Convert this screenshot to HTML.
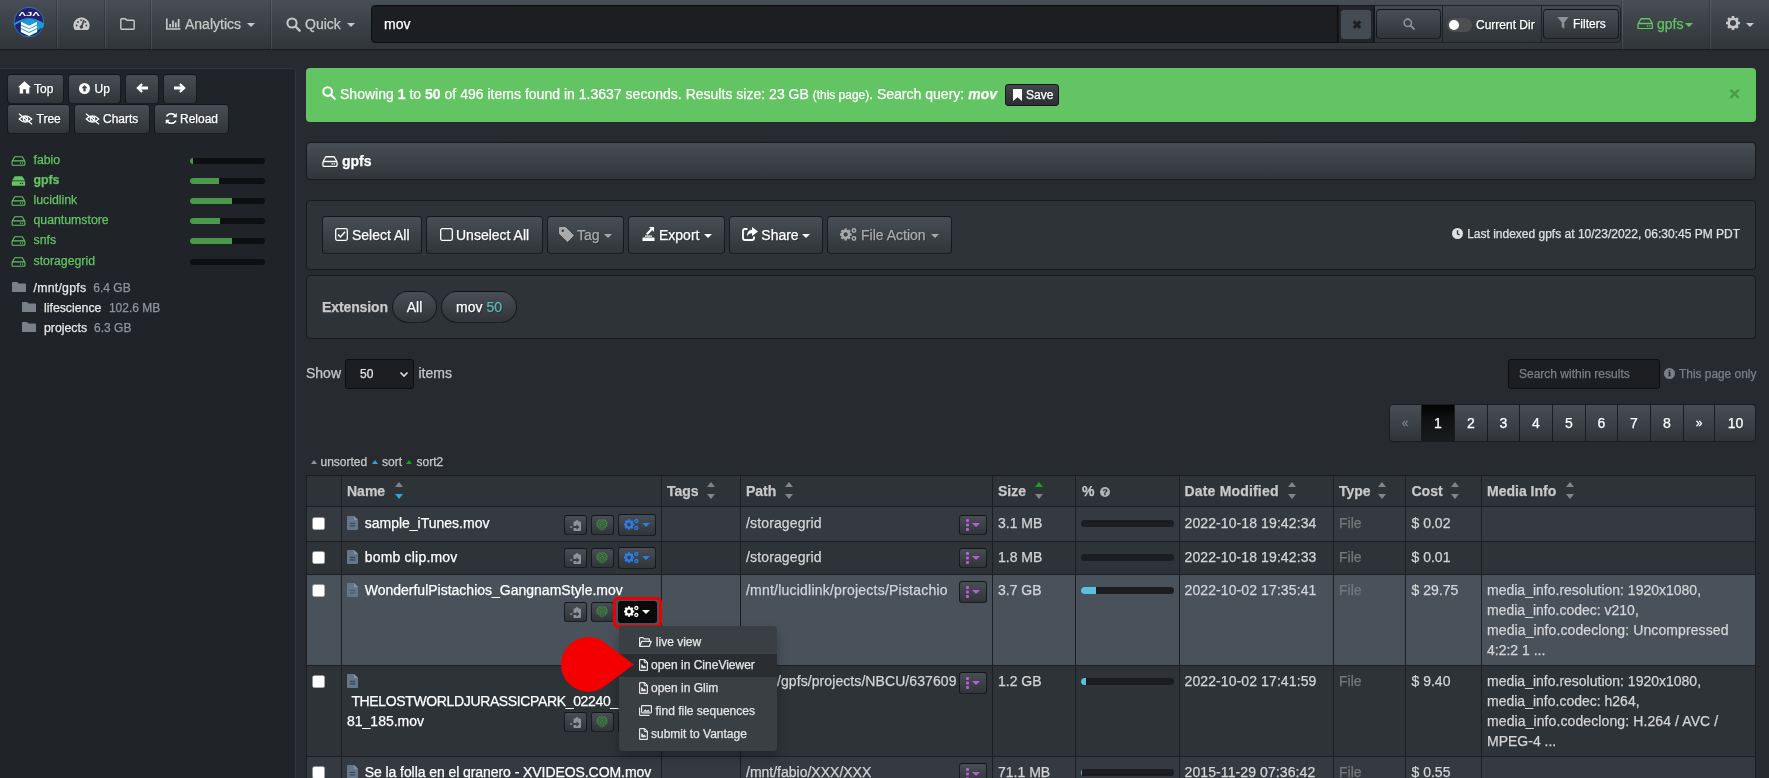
<!DOCTYPE html>
<html lang="en">
<head>
<meta charset="utf-8">
<title>diskover</title>
<style>
*{box-sizing:border-box}
html,body{margin:0;padding:0}
body{width:1769px;height:778px;overflow:hidden;background:#272b30;color:#c8c8c8;font-family:"Liberation Sans",Arial,sans-serif;font-size:14px;line-height:20px;position:relative;will-change:transform;-webkit-text-stroke:0.250px}
svg{display:inline-block;vertical-align:middle}
svg:not([fill]){fill:currentColor}
.abs{position:absolute}
/* NAVBAR */
#nav{position:absolute;left:0;top:0;width:1769px;height:50px;background:linear-gradient(#484e55,#3a3f44 60%,#313539);border-bottom:1px solid #191b1e}
#nav .sep{position:absolute;top:0;width:2px;height:49px;border-left:1px solid rgba(0,0,0,.2);border-right:1px solid rgba(255,255,255,.1)}
#nav .item{position:absolute;top:0;height:48px;line-height:49px;color:#c8c8c8;font-size:14px;white-space:nowrap}
.caret{display:inline-block;width:0;height:0;border-top:4px solid;border-left:4px solid transparent;border-right:4px solid transparent;vertical-align:middle;margin-left:3px}
.btn{position:absolute;border:1px solid rgba(0,0,0,.6);border-radius:4px;background:linear-gradient(#484e55,#3a3f44 60%,#313539);color:#fff;white-space:nowrap;text-shadow:1px 1px 1px rgba(0,0,0,.3)}
/* SIDEBAR */
#side{position:absolute;left:0;top:68px;width:296px;height:720px;background:#202328;border:1px solid #30353b;border-left:0;border-radius:0 4px 0 0}
.sbtn{height:30px;line-height:28px;font-size:12px;padding:0}
.sbtn span{position:absolute;top:0}
.vol{position:absolute;left:11px;height:20px;line-height:20px;font-size:12.300px;color:#62c462;white-space:nowrap}
.vol span{position:absolute;left:22.500px;top:0}
.vbar{position:absolute;left:190px;width:75px;height:6px;border-radius:3px;background:#0e0f11;overflow:hidden}
.vbar i{display:block;height:6px;background:#4b9a4b}
.dir{position:absolute;height:20px;line-height:20px;font-size:12.300px;color:#e8e8e8;white-space:nowrap}
.dir em{font-style:normal;color:#8f959c;margin-left:4px;font-size:12px}
/* MAIN */
#alert{position:absolute;left:306px;top:68px;width:1450px;height:54px;border-radius:4px;background:#62c462;color:#fff;font-size:14px;line-height:53px;white-space:nowrap}
.panel{position:absolute;left:306px;width:1450px;border:1px solid #17191c;border-radius:4px;background:#2e3338}
.tbtn{top:216px;height:38px;line-height:36px;font-size:14px}
.tbtn span{position:absolute;top:0}

</style>
</head>
<body>
<!-- NAVBAR -->
<div id="nav">
  <!-- logo -->
  <svg class="abs" style="left:13px;top:6px" width="32" height="32" viewBox="13 6 32 32" fill="none">
    <circle cx="28.950" cy="22.050" r="14.800" fill="#25206e" stroke="#1a90d0" stroke-width="0.800"/>
    <path d="M14.200 23.400 Q20.500 18.600 29.100 17.900 L20.900 21.800 L14.500 25.200Z" fill="#1d9ad6"/>
    <path d="M29.100 17.900 Q37.700 18.600 43.800 23.400 Q44 25.500 43.300 27 L37.100 30.800 L37.100 21.800Z" fill="#1d9ad6"/>
    <path d="M20.900 21.800 L29.100 17.900 L37.100 21.800 L37.100 32.100 L29.100 36 L20.900 32.100Z" fill="#1d9ad6"/>
    <path d="M20.900 21.80 L29.100 25.70 L37.100 21.80 L37.100 24.60 L29.100 28.50 L20.900 24.60Z" fill="#fff"/>
    <path d="M20.900 25.40 L29.100 29.30 L37.100 25.40 L37.100 28.00 L29.100 31.90 L20.900 28.00Z" fill="#fff"/>
    <path d="M20.900 29.00 L29.100 32.90 L37.100 29.00 L37.100 32.10 L29.100 36.00 L20.900 32.10Z" fill="#fff"/>
    <text x="29.200" y="16.100" font-family="Liberation Sans, sans-serif" font-size="5.700" font-weight="bold" fill="#fff" text-anchor="middle" textLength="21.400" lengthAdjust="spacingAndGlyphs">&#923;J&#923;</text>
  </svg>
  <div class="sep" style="left:56px"></div>
  <!-- tachometer -->
  <svg class="abs" style="left:73px;top:17px;color:#c8c8c8" width="17" height="14" viewBox="0 0 17 14">
    <path d="M8.5 0.500 A8 8 0 0 0 1.200 12 Q1.500 13 2.500 13 L14.500 13 Q15.500 13 15.800 12 A8 8 0 0 0 8.500 0.500Z"/>
    <path d="M10.800 3.500 L8.500 10" stroke="#3d4248" stroke-width="1.6" stroke-linecap="round" fill="none"/>
    <circle cx="8.300" cy="10" r="1.700" fill="#3d4248"/>
    <circle cx="3.600" cy="8.500" r="0.900" fill="#3d4248"/><circle cx="5" cy="5" r="0.900" fill="#3d4248"/><circle cx="8.200" cy="3.200" r="0.900" fill="#3d4248"/><circle cx="13.400" cy="8.500" r="0.900" fill="#3d4248"/><circle cx="12.300" cy="5" r="0.900" fill="#3d4248"/>
  </svg>
  <div class="sep" style="left:104px"></div>
  <!-- folder outline -->
  <svg class="abs" style="left:120px;top:18px;color:#c8c8c8" width="15" height="12" viewBox="0 0 15 12">
    <path d="M1.700 0.800 L5.300 0.800 L6.800 2.300 L13.300 2.300 Q14.200 2.300 14.200 3.200 L14.200 10.300 Q14.200 11.200 13.300 11.200 L1.700 11.200 Q0.800 11.200 0.800 10.300 L0.800 1.700 Q0.800 0.800 1.700 0.800Z" fill="none" stroke="currentColor" stroke-width="1.4"/>
  </svg>
  <div class="sep" style="left:150px"></div>
  <!-- bar chart -->
  <svg class="abs" style="left:166px;top:18px;color:#c8c8c8" width="15" height="12" viewBox="0 0 15 12">
    <path d="M0.800 0.500 L0.800 11 L14.500 11" fill="none" stroke="currentColor" stroke-width="1.600"/>
    <rect x="3.300" y="6" width="1.800" height="3.400"/><rect x="6.100" y="2.500" width="1.800" height="6.900"/><rect x="8.900" y="4.500" width="1.800" height="4.900"/><rect x="11.700" y="1" width="1.800" height="8.400"/>
  </svg>
  <div class="item" style="left:185px">Analytics<span class="caret" style="margin-left:6px"></span></div>
  <div class="sep" style="left:270px"></div>
  <svg class="abs" style="left:286px;top:17px;color:#c8c8c8" width="15" height="15" viewBox="0 0 15 15">
    <circle cx="6" cy="6" r="4.600" fill="none" stroke="currentColor" stroke-width="2"/><path d="M9.500 9.500 L13.600 13.600" stroke="currentColor" stroke-width="2.400" stroke-linecap="round"/>
  </svg>
  <div class="item" style="left:305px">Quick<span class="caret" style="margin-left:6px"></span></div>
  <!-- search input group -->
  <div class="abs" style="left:371px;top:5px;width:967px;height:38px;background:#1c1e22;border:1px solid #0c0d0e;border-radius:4px 0 0 4px;color:#fff;font-size:14px;line-height:36px;padding-left:12px">mov</div>
  <div class="abs" style="left:1338px;top:5px;width:283px;height:38px;border:1px solid #1f2226;border-left:0;border-radius:0 5px 5px 0;background:linear-gradient(#434950,#373c41 60%,#303438)"></div>
  <div class="abs" style="left:1338px;top:5px;width:37px;height:38px;background:#22252a;border:1px solid #16181b;border-width:1px 2px 1px 1px"></div>
  <div class="abs" style="left:1341px;top:10px;width:30px;height:29px;background:#454b53;border-radius:3px;color:#1c1e22;text-align:center;font-size:11.500px;font-weight:bold;line-height:30px;padding-left:1px;-webkit-text-stroke:0">&#10006;</div>
  <div class="btn" style="left:1376px;top:9px;width:65px;height:30px"></div>
  <svg class="abs" style="left:1402.800px;top:17.600px;color:#8d939a" width="12" height="12" viewBox="0 0 15 15">
    <circle cx="6" cy="6" r="4.600" fill="none" stroke="currentColor" stroke-width="2"/><path d="M9.500 9.500 L13.600 13.600" stroke="currentColor" stroke-width="2.400" stroke-linecap="round"/>
  </svg>
  <div class="abs" style="left:1442px;top:6px;width:1px;height:36px;background:#1f2226"></div>
  <div class="abs" style="left:1447px;top:18px;width:25px;height:14px;border-radius:7px;background:#4e4e50"></div>
  <div class="abs" style="left:1449px;top:20px;width:10px;height:10px;border-radius:5px;background:#fff"></div>
  <div class="abs" style="left:1476px;top:15px;font-size:12px;line-height:20px;color:#fff;text-shadow:1px 1px 1px rgba(0,0,0,.3);white-space:nowrap">Current Dir</div>
  <div class="abs" style="left:1541px;top:6px;width:1px;height:36px;background:#1f2226"></div>
  <div class="btn" style="left:1543px;top:9px;width:76px;height:30px;font-size:12px;line-height:29px;padding-left:29px">Filters</div>
  <svg class="abs" style="left:1557px;top:17px;color:#8d939a" width="12" height="12" viewBox="0 0 12 12"><path d="M0.300 0 L11.700 0 L7.300 5.200 L7.300 12 L4.700 9.800 L4.700 5.200Z"/></svg>
  <div class="sep" style="left:1621px"></div>
  <!-- hdd green -->
  <svg class="abs" style="left:1636.500px;top:18px;color:#62c462" width="16.500" height="11.300" viewBox="0 0 17 12">
    <path d="M4 0.800 L13 0.800 L16 6 L1 6Z M1.800 5.800 L15.200 5.800 Q16.200 5.800 16.200 6.800 L16.200 10.200 Q16.200 11.200 15.200 11.200 L1.800 11.200 Q0.800 11.200 0.800 10.200 L0.800 6.800 Q0.800 5.800 1.800 5.800Z" fill="none" stroke="currentColor" stroke-width="1.400" stroke-linejoin="round"/>
    <rect x="10.200" y="7.800" width="1.400" height="1.500"/><rect x="12.600" y="7.800" width="1.400" height="1.500"/>
  </svg>
  <div class="item" style="left:1657px;color:#62c462">gpfs<span class="caret" style="margin-left:2px"></span></div>
  <div class="sep" style="left:1709px"></div>
  <!-- gear -->
  <svg class="abs" style="left:1726px;top:16px;color:#c8c8c8" width="14" height="14" viewBox="-7 -7 14 14">
    <g id="gearshape"><circle r="4.300" fill="none" stroke="currentColor" stroke-width="2.600"/>
    <g stroke="currentColor" stroke-width="2.600"><path d="M0 -7V-4.500M0 7V4.500M-7 0H-4.500M7 0H4.500M-4.950 -4.950L-3.300 -3.300M4.950 4.950L3.300 3.300M-4.950 4.950L-3.300 3.300M4.950 -4.950L3.300 -3.300"/></g></g>
  </svg>
  <div class="item" style="left:1746px;color:#c8c8c8"><span class="caret" style="margin-left:0"></span></div>
</div>
<!-- SIDEBAR -->
<div id="side"></div>
<div class="btn sbtn" style="left:7px;top:74px;width:57px"><svg class="abs" style="left:10px;top:6px" width="13" height="13" viewBox="0 0 13 13"><path d="M6.500 0.300 L13 6.300 L11.300 6.300 L11.300 12.500 L7.900 12.500 L7.900 8.300 L5.100 8.300 L5.100 12.500 L1.700 12.500 L1.700 6.300 L0 6.300Z" fill="#fff"/></svg><span style="left:26px">Top</span></div>
<div class="btn sbtn" style="left:68px;top:74px;width:53px"><svg class="abs" style="left:10px;top:8px" width="11" height="11" viewBox="0 0 12 12"><circle cx="6" cy="6" r="6" fill="#fff"/><path d="M6 2.300 L9.300 5.800 L7.200 5.800 L7.200 9.300 L4.800 9.300 L4.800 5.800 L2.700 5.800Z" fill="#3d4248"/></svg><span style="left:25.500px">Up</span></div>
<div class="btn sbtn" style="left:125px;top:74px;width:34px"><svg class="abs" style="left:10px;top:8px" width="12" height="10" viewBox="0 0 12 10"><path d="M5.400 0.300 L6.900 1.800 L5.100 3.600 L12 3.600 L12 6.400 L5.100 6.400 L6.900 8.200 L5.400 9.700 L0.200 5Z" fill="#fff"/></svg></div>
<div class="btn sbtn" style="left:163px;top:74px;width:34px"><svg class="abs" style="left:10px;top:8px" width="12" height="10" viewBox="0 0 12 10"><path d="M6.600 0.300 L5.100 1.800 L6.900 3.600 L0 3.600 L0 6.400 L6.900 6.400 L5.100 8.200 L6.600 9.700 L11.800 5Z" fill="#fff"/></svg></div>
<div class="btn sbtn" style="left:7px;top:104px;width:63px"><svg class="abs" style="left:10px;top:7.500px" width="15" height="12" viewBox="0 0 16 12" fill="none" stroke="#fff" stroke-width="1.250"><path d="M1.300 6 Q8 -0.800 14.700 6 Q8 12.800 1.300 6Z"/><circle cx="8" cy="6" r="2.300"/><path d="M1 0.300 L15 11.700" stroke-width="1.350"/></svg><span style="left:28.500px">Tree</span></div>
<div class="btn sbtn" style="left:74px;top:104px;width:76px"><svg class="abs" style="left:10px;top:7.500px" width="15" height="12" viewBox="0 0 16 12" fill="none" stroke="#fff" stroke-width="1.250"><path d="M1.300 6 Q8 -0.800 14.700 6 Q8 12.800 1.300 6Z"/><circle cx="8" cy="6" r="2.300"/><path d="M1 0.300 L15 11.700" stroke-width="1.350"/></svg><span style="left:28px">Charts</span></div>
<div class="btn sbtn" style="left:154px;top:104px;width:75px"><svg class="abs" style="left:9.500px;top:6.500px" width="12.500" height="13" viewBox="0 0 12 12" fill="none" stroke="#fff" stroke-width="1.600"><path d="M10.500 4.500 A5 5 0 0 0 1.500 4"/><path d="M1.500 7.500 A5 5 0 0 0 10.500 8"/><path d="M11.300 0.800 V4.800 H7.300Z M0.700 11.200 V7.200 H4.700Z" fill="#fff" stroke="none"/></svg><span style="left:25px">Reload</span></div>
<div class="vol" style="top:150px"><svg class="abs" style="left:0;top:5.500px" width="15" height="10" viewBox="0 0 17 12"><path d="M4 0.800 L13 0.800 L16 6 L1 6Z M1.800 5.800 L15.200 5.800 Q16.200 5.800 16.200 6.800 L16.200 10.200 Q16.200 11.200 15.200 11.200 L1.800 11.200 Q0.800 11.200 0.800 10.200 L0.800 6.800 Q0.800 5.800 1.800 5.800Z" fill="none" stroke="currentColor" stroke-width="1.250" stroke-linejoin="round"/><rect x="10.200" y="7.800" width="1.400" height="1.500"/><rect x="12.600" y="7.800" width="1.400" height="1.500"/></svg><span>fabio</span></div>
<div class="vbar" style="top:158px"><i style="width:3px"></i></div>
<div class="vol" style="top:170px;font-weight:bold"><svg class="abs" style="left:0;top:5.500px" width="15" height="10" viewBox="0 0 17 12"><path d="M4 0.300 L13 0.300 L16.300 5.300 L0.700 5.300Z M1.800 6.200 L15.200 6.200 Q16.500 6.200 16.500 7.200 L16.500 10.700 Q16.500 11.700 15.200 11.700 L1.800 11.700 Q0.500 11.700 0.500 10.700 L0.500 7.200 Q0.500 6.200 1.800 6.200Z"/><rect x="10.200" y="8.200" width="1.400" height="1.500" fill="#202328"/><rect x="12.600" y="8.200" width="1.400" height="1.500" fill="#202328"/></svg><span>gpfs</span></div>
<div class="vbar" style="top:178px"><i style="width:29px"></i></div>
<div class="vol" style="top:190px"><svg class="abs" style="left:0;top:5.500px" width="15" height="10" viewBox="0 0 17 12"><path d="M4 0.800 L13 0.800 L16 6 L1 6Z M1.800 5.800 L15.200 5.800 Q16.200 5.800 16.200 6.800 L16.200 10.200 Q16.200 11.200 15.200 11.200 L1.800 11.200 Q0.800 11.200 0.800 10.200 L0.800 6.800 Q0.800 5.800 1.800 5.800Z" fill="none" stroke="currentColor" stroke-width="1.250" stroke-linejoin="round"/><rect x="10.200" y="7.800" width="1.400" height="1.500"/><rect x="12.600" y="7.800" width="1.400" height="1.500"/></svg><span>lucidlink</span></div>
<div class="vbar" style="top:198px"><i style="width:42px"></i></div>
<div class="vol" style="top:210px"><svg class="abs" style="left:0;top:5.500px" width="15" height="10" viewBox="0 0 17 12"><path d="M4 0.800 L13 0.800 L16 6 L1 6Z M1.800 5.800 L15.200 5.800 Q16.200 5.800 16.200 6.800 L16.200 10.200 Q16.200 11.200 15.200 11.200 L1.800 11.200 Q0.800 11.200 0.800 10.200 L0.800 6.800 Q0.800 5.800 1.800 5.800Z" fill="none" stroke="currentColor" stroke-width="1.250" stroke-linejoin="round"/><rect x="10.200" y="7.800" width="1.400" height="1.500"/><rect x="12.600" y="7.800" width="1.400" height="1.500"/></svg><span>quantumstore</span></div>
<div class="vbar" style="top:218px"><i style="width:30px"></i></div>
<div class="vol" style="top:230px"><svg class="abs" style="left:0;top:5.500px" width="15" height="10" viewBox="0 0 17 12"><path d="M4 0.800 L13 0.800 L16 6 L1 6Z M1.800 5.800 L15.200 5.800 Q16.200 5.800 16.200 6.800 L16.200 10.200 Q16.200 11.200 15.200 11.200 L1.800 11.200 Q0.800 11.200 0.800 10.200 L0.800 6.800 Q0.800 5.800 1.800 5.800Z" fill="none" stroke="currentColor" stroke-width="1.250" stroke-linejoin="round"/><rect x="10.200" y="7.800" width="1.400" height="1.500"/><rect x="12.600" y="7.800" width="1.400" height="1.500"/></svg><span>snfs</span></div>
<div class="vbar" style="top:238px"><i style="width:42px"></i></div>
<div class="vol" style="top:251px"><svg class="abs" style="left:0;top:5.500px" width="15" height="10" viewBox="0 0 17 12"><path d="M4 0.800 L13 0.800 L16 6 L1 6Z M1.800 5.800 L15.200 5.800 Q16.200 5.800 16.200 6.800 L16.200 10.200 Q16.200 11.200 15.200 11.200 L1.800 11.200 Q0.800 11.200 0.800 10.200 L0.800 6.800 Q0.800 5.800 1.800 5.800Z" fill="none" stroke="currentColor" stroke-width="1.250" stroke-linejoin="round"/><rect x="10.200" y="7.800" width="1.400" height="1.500"/><rect x="12.600" y="7.800" width="1.400" height="1.500"/></svg><span>storagegrid</span></div>
<div class="vbar" style="top:259px"><i style="width:0px"></i></div>
<div class="dir" style="left:12px;top:278px"><svg width="14" height="10.500" viewBox="0 0 15 11" style="position:absolute;left:0;top:3.500px;color:#7a8088"><path d="M1 0 L5.500 0 L7 1.600 L14 1.600 Q15 1.600 15 2.600 L15 10 Q15 11 14 11 L1 11 Q0 11 0 10 L0 1 Q0 0 1 0Z"/></svg><span style="margin-left:21.500px;letter-spacing:0.250px">/mnt/gpfs</span><em style="margin-left:7px">6.4 GB</em></div>
<div class="dir" style="left:22px;top:298px"><svg width="14" height="10.500" viewBox="0 0 15 11" style="position:absolute;left:0;top:3.500px;color:#7a8088"><path d="M1 0 L5.500 0 L7 1.600 L14 1.600 Q15 1.600 15 2.600 L15 10 Q15 11 14 11 L1 11 Q0 11 0 10 L0 1 Q0 0 1 0Z"/></svg><span style="margin-left:22px">lifescience</span><em style="margin-left:7.500px">102.6 MB</em></div>
<div class="dir" style="left:22px;top:318px"><svg width="14" height="10.500" viewBox="0 0 15 11" style="position:absolute;left:0;top:3.500px;color:#7a8088"><path d="M1 0 L5.500 0 L7 1.600 L14 1.600 Q15 1.600 15 2.600 L15 10 Q15 11 14 11 L1 11 Q0 11 0 10 L0 1 Q0 0 1 0Z"/></svg><span style="margin-left:22px">projects</span><em style="margin-left:7px">6.3 GB</em></div>

<!-- MAIN -->

<div id="alert">
  <svg class="abs" style="left:16px;top:18px" width="14" height="14" viewBox="0 0 15 15"><circle cx="6" cy="6" r="4.600" fill="none" stroke="#fff" stroke-width="2.200"/><path d="M9.500 9.500 L13.600 13.600" stroke="#fff" stroke-width="2.400" stroke-linecap="round"/></svg>
  <span class="abs" style="left:34px;top:0;letter-spacing:0.015px">Showing <b>1</b> to <b>50</b> of 496 items found in 1.3637 seconds. Results size: 23 GB <small style="font-size:11.900px">(this page)</small>. Search query: <b><i>mov</i></b></span>
  <div class="abs" style="left:699px;top:16px;width:54px;height:22px;border:1px solid #14161a;border-radius:3px;background:linear-gradient(#41464d,#34383d 60%,#2b2e33);color:#fff;font-size:12px;line-height:20px;padding-left:20px">Save</div>
  <svg class="abs" style="left:707px;top:21px" width="9" height="12" viewBox="0 0 9 11" preserveAspectRatio="none"><path d="M0 0 H9 V11 L4.500 7.500 L0 11Z" fill="#fff"/></svg>
  <div class="abs" style="left:1423px;top:0;color:#4a9a4a;font-size:19px;font-weight:bold;line-height:52px">&#215;</div>
</div>
<!-- breadcrumb -->
<div class="abs" style="left:306px;top:142px;width:1450px;height:38px;border:1px solid #17191c;border-radius:4px;background:linear-gradient(#484e55,#3a3f44 60%,#313539);color:#fff;font-weight:bold;font-size:14px;line-height:36px">
  <svg class="abs" style="left:15px;top:12.500px;color:#fff" width="16" height="11" viewBox="0 0 17 12"><path d="M4 0.800 L13 0.800 L16 6 L1 6Z M1.800 5.800 L15.200 5.800 Q16.200 5.800 16.200 6.800 L16.200 10.200 Q16.200 11.200 15.200 11.200 L1.800 11.200 Q0.800 11.200 0.800 10.200 L0.800 6.800 Q0.800 5.800 1.800 5.800Z" fill="none" stroke="currentColor" stroke-width="1.400" stroke-linejoin="round"/><rect x="10.200" y="7.800" width="1.400" height="1.500"/><rect x="12.600" y="7.800" width="1.400" height="1.500"/></svg>
  <span class="abs" style="left:35px;top:0">gpfs</span>
</div>
<!-- buttons panel -->
<div class="panel" style="top:200px;height:70px"></div>
<div class="btn tbtn" style="left:322px;width:100px"><svg class="abs" style="left:12px;top:11px" width="13" height="13" viewBox="0 0 13 13" fill="none" stroke="#fff" stroke-width="1.300"><rect x="0.700" y="0.700" width="11.600" height="11.600" rx="1.500"/><path d="M3 6.500 L5.500 9 L10 3.800" stroke-width="1.500"/></svg><span style="left:29px">Select All</span></div>
<div class="btn tbtn" style="left:426px;width:117px"><svg class="abs" style="left:13px;top:11px" width="13" height="13" viewBox="0 0 13 13" fill="none" stroke="#fff" stroke-width="1.300"><rect x="0.700" y="0.700" width="11.600" height="11.600" rx="1.500"/></svg><span style="left:29px">Unselect All</span></div>
<div class="btn tbtn" style="left:547px;width:77px;color:#aaa"><svg class="abs" style="left:11px;top:10px" width="15" height="15" viewBox="0 0 15 15"><path d="M0.500 0.500 H6.500 L14.500 8.500 L8.500 14.500 L0.500 6.500Z" fill="#aaa" stroke="#aaa" stroke-linejoin="round" stroke-width="1"/><circle cx="3.800" cy="3.800" r="1.300" fill="#3d4248"/></svg><span style="left:29px">Tag</span><i class="caret" style="position:absolute;left:56px;top:17px;margin:0"></i></div>
<div class="btn tbtn" style="left:628px;width:97px"><svg class="abs" style="left:13px;top:10px" width="13" height="14" viewBox="0 0 13 14" fill="#fff"><path d="M0.500 10.500 H12.500 V14 H0.500Z"/><path d="M3 8.500 H10 V9.700 H3Z"/><path d="M7 0 H12 V5 L10.300 3.300 L5.500 8 L4 6.500 L8.700 1.700Z"/></svg><span style="left:30px">Export</span><i class="caret" style="position:absolute;left:75px;top:17px;margin:0"></i></div>
<div class="btn tbtn" style="left:729px;width:94px"><svg class="abs" style="left:12px;top:10px" width="16" height="14" viewBox="0 0 16 14"><path d="M5.500 2 H3 Q1 2 1 4 V11 Q1 13 3 13 H10 Q12 13 12 11 V9.500" fill="none" stroke="#fff" stroke-width="1.800"/><path d="M10 0 L16 4.500 L10 9 V6.300 Q6.500 6.300 5 9.500 Q5 3 10 2.800Z" fill="#fff"/></svg><span style="left:31.300px">Share</span><i class="caret" style="position:absolute;left:72px;top:17px;margin:0"></i></div>
<div class="btn tbtn" style="left:827px;width:125px;color:#aaa"><svg class="abs" style="left:12px;top:10px;color:#aaa" width="17" height="15" viewBox="0 0 15 13"><g transform="translate(5,6.500)"><circle r="3" fill="none" stroke="currentColor" stroke-width="2.200"/><g stroke="currentColor" stroke-width="2.100"><path d="M0 -5.200V-3.400M0 5.200V3.400M-5.200 0H-3.400M5.200 0H3.400M-3.700 -3.700L-2.400 -2.400M3.700 3.700L2.400 2.400M-3.700 3.700L-2.400 2.400M3.700 -3.700L2.400 -2.400"/></g></g><circle cx="12.300" cy="3" r="1.500" fill="none" stroke="currentColor" stroke-width="1.300"/><circle cx="12.300" cy="10" r="1.500" fill="none" stroke="currentColor" stroke-width="1.300"/></svg><span style="left:33px">File Action</span><i class="caret" style="position:absolute;left:103px;top:17px;margin:0"></i></div>
<svg class="abs" style="left:1452px;top:228px" width="11" height="11" viewBox="0 0 11 11"><circle cx="5.500" cy="5.500" r="5.500" fill="#e0e0e0"/><path d="M5.500 2.300 V5.800 L7.600 7" fill="none" stroke="#2e3338" stroke-width="1.300"/></svg>
<div class="abs" style="left:1340px;top:224px;width:400px;text-align:right;font-size:12px;color:#e0e0e0;white-space:nowrap">Last indexed gpfs at 10/23/2022, 06:30:45 PM PDT</div>
<!-- extension panel -->
<div class="panel" style="top:275px;height:64px"></div>
<div class="abs" style="left:322px;top:297px;font-weight:bold;color:#c8c8c8;font-size:14px;letter-spacing:-0.100px">Extension</div>
<div class="btn" style="left:392px;top:291px;width:45px;height:32px;border-radius:16px;text-align:center;line-height:30px;font-size:14px">All</div>
<div class="btn" style="left:441px;top:291px;width:76px;height:32px;border-radius:16px;text-align:center;line-height:30px;font-size:14px">mov <span style="color:#5bb8b8">50</span></div>
<!-- show row -->
<div class="abs" style="left:306px;top:363px;font-size:14px;color:#c8c8c8">Show</div>
<div class="abs" style="left:345px;top:359px;width:69px;height:30px;border:1px solid #0c0d0e;border-radius:3px;background:#1c1e22;color:#e4e4e4;font-size:12px;line-height:28px;padding-left:14px">50</div>
<svg class="abs" style="left:399px;top:371px" width="10" height="7" viewBox="0 0 10 7"><path d="M1.500 1.500 L5 5 L8.500 1.500" fill="none" stroke="#ddd" stroke-width="1.700"/></svg>
<div class="abs" style="left:418.500px;top:363px;font-size:14px;color:#c8c8c8">items</div>
<div class="abs" style="left:1508px;top:359px;width:152px;height:30px;border:1px solid #0c0d0e;border-radius:3px;background:#1c1e22;color:#7a8088;font-size:12px;line-height:28px;padding-left:10px">Search within results</div>
<div class="abs" style="left:1664px;top:368px;width:11px;height:11px;border-radius:6px;background:#7a8088;color:#272b30;font-size:9px;font-weight:bold;line-height:11px;text-align:center;font-family:'Liberation Serif',serif">i</div>
<div class="abs" style="left:1679px;top:364px;font-size:11.900px;color:#7a8088;white-space:nowrap">This page only</div>
<div class="abs" style="left:1389px;top:404px;width:367px;height:38px;border:1px solid #1a1c1f;border-radius:4px;background:linear-gradient(#484e55,#3a3f44 60%,#313539);overflow:hidden"></div>
<div class="abs" style="left:1389px;top:405px;width:32px;height:36px;line-height:37px;text-align:center;font-size:14px;color:#fff;border-left:1px solid #1a1c1f;font-size:12px;color:#7a8088;border-left:0;">«</div>
<div class="abs" style="left:1421px;top:405px;width:33px;height:36px;line-height:37px;text-align:center;font-size:14px;color:#fff;border-left:1px solid #1a1c1f;background:linear-gradient(#020202,#101112 40%,#191b1e);">1</div>
<div class="abs" style="left:1454px;top:405px;width:33px;height:36px;line-height:37px;text-align:center;font-size:14px;color:#fff;border-left:1px solid #1a1c1f;">2</div>
<div class="abs" style="left:1487px;top:405px;width:32px;height:36px;line-height:37px;text-align:center;font-size:14px;color:#fff;border-left:1px solid #1a1c1f;">3</div>
<div class="abs" style="left:1519px;top:405px;width:33px;height:36px;line-height:37px;text-align:center;font-size:14px;color:#fff;border-left:1px solid #1a1c1f;">4</div>
<div class="abs" style="left:1552px;top:405px;width:33px;height:36px;line-height:37px;text-align:center;font-size:14px;color:#fff;border-left:1px solid #1a1c1f;">5</div>
<div class="abs" style="left:1585px;top:405px;width:32px;height:36px;line-height:37px;text-align:center;font-size:14px;color:#fff;border-left:1px solid #1a1c1f;">6</div>
<div class="abs" style="left:1617px;top:405px;width:33px;height:36px;line-height:37px;text-align:center;font-size:14px;color:#fff;border-left:1px solid #1a1c1f;">7</div>
<div class="abs" style="left:1650px;top:405px;width:33px;height:36px;line-height:37px;text-align:center;font-size:14px;color:#fff;border-left:1px solid #1a1c1f;">8</div>
<div class="abs" style="left:1683px;top:405px;width:31px;height:36px;line-height:37px;text-align:center;font-size:14px;color:#fff;border-left:1px solid #1a1c1f;font-size:12px;">»</div>
<div class="abs" style="left:1714px;top:405px;width:42px;height:36px;line-height:37px;text-align:center;font-size:14px;color:#fff;border-left:1px solid #1a1c1f;">10</div>

<!--TABLE-START-->
<style>
.up{position:absolute;width:0;height:0;border-style:solid;border-color:transparent;border-width:0 3.500px 4px 3.500px}
.dn{position:absolute;width:0;height:0;border-style:solid;border-color:transparent;border-width:5.300px 4.750px 0 4.750px}
.th{font-weight:bold;color:#c8c8c8;font-size:14px;line-height:20px;white-space:nowrap}
.td{color:#d4d4d4;font-size:14px;line-height:20px;white-space:nowrap}
</style>
<span class="up" style="left:310.500px;top:460px;border-bottom-color:#8d939a"></span><div class="abs lg" style="left:320.500px;top:452px">unsorted</div><span class="up" style="left:372px;top:460px;border-bottom-color:#2fa4e7"></span><div class="abs lg" style="left:382px;top:452px">sort</div><span class="up" style="left:406px;top:460px;border-bottom-color:#18a518"></span><div class="abs lg" style="left:416.500px;top:452px">sort2</div>
<style>.lg{font-size:12px;color:#c8c8c8;white-space:nowrap;line-height:20px}</style>
<div class="abs" style="left:306px;top:475px;width:1450px;height:320px;background:#1c1e22"></div>
<div class="abs" style="left:307px;top:476px;width:34px;height:30px;background:#2e3338"></div><div class="abs" style="left:342px;top:476px;width:319px;height:30px;background:#2e3338"></div><div class="abs" style="left:662px;top:476px;width:78px;height:30px;background:#2e3338"></div><div class="abs" style="left:741px;top:476px;width:251px;height:30px;background:#2e3338"></div><div class="abs" style="left:993px;top:476px;width:82px;height:30px;background:#2e3338"></div><div class="abs" style="left:1076px;top:476px;width:103px;height:30px;background:#2e3338"></div><div class="abs" style="left:1180px;top:476px;width:153px;height:30px;background:#2e3338"></div><div class="abs" style="left:1334px;top:476px;width:71px;height:30px;background:#2e3338"></div><div class="abs" style="left:1406px;top:476px;width:75px;height:30px;background:#2e3338"></div><div class="abs" style="left:1482px;top:476px;width:273px;height:30px;background:#2e3338"></div>
<div class="abs" style="left:307px;top:507px;width:34px;height:34px;background:#353a41"></div><div class="abs" style="left:342px;top:507px;width:319px;height:34px;background:#353a41"></div><div class="abs" style="left:662px;top:507px;width:78px;height:34px;background:#353a41"></div><div class="abs" style="left:741px;top:507px;width:251px;height:34px;background:#353a41"></div><div class="abs" style="left:993px;top:507px;width:82px;height:34px;background:#353a41"></div><div class="abs" style="left:1076px;top:507px;width:103px;height:34px;background:#353a41"></div><div class="abs" style="left:1180px;top:507px;width:153px;height:34px;background:#353a41"></div><div class="abs" style="left:1334px;top:507px;width:71px;height:34px;background:#353a41"></div><div class="abs" style="left:1406px;top:507px;width:75px;height:34px;background:#353a41"></div><div class="abs" style="left:1482px;top:507px;width:273px;height:34px;background:#353a41"></div>
<div class="abs" style="left:307px;top:542px;width:34px;height:32px;background:#2e3338"></div><div class="abs" style="left:342px;top:542px;width:319px;height:32px;background:#2e3338"></div><div class="abs" style="left:662px;top:542px;width:78px;height:32px;background:#2e3338"></div><div class="abs" style="left:741px;top:542px;width:251px;height:32px;background:#2e3338"></div><div class="abs" style="left:993px;top:542px;width:82px;height:32px;background:#2e3338"></div><div class="abs" style="left:1076px;top:542px;width:103px;height:32px;background:#2e3338"></div><div class="abs" style="left:1180px;top:542px;width:153px;height:32px;background:#2e3338"></div><div class="abs" style="left:1334px;top:542px;width:71px;height:32px;background:#2e3338"></div><div class="abs" style="left:1406px;top:542px;width:75px;height:32px;background:#2e3338"></div><div class="abs" style="left:1482px;top:542px;width:273px;height:32px;background:#2e3338"></div>
<div class="abs" style="left:307px;top:575px;width:34px;height:90px;background:#49515a"></div><div class="abs" style="left:342px;top:575px;width:319px;height:90px;background:#49515a"></div><div class="abs" style="left:662px;top:575px;width:78px;height:90px;background:#49515a"></div><div class="abs" style="left:741px;top:575px;width:251px;height:90px;background:#49515a"></div><div class="abs" style="left:993px;top:575px;width:82px;height:90px;background:#49515a"></div><div class="abs" style="left:1076px;top:575px;width:103px;height:90px;background:#49515a"></div><div class="abs" style="left:1180px;top:575px;width:153px;height:90px;background:#49515a"></div><div class="abs" style="left:1334px;top:575px;width:71px;height:90px;background:#49515a"></div><div class="abs" style="left:1406px;top:575px;width:75px;height:90px;background:#49515a"></div><div class="abs" style="left:1482px;top:575px;width:273px;height:90px;background:#49515a"></div>
<div class="abs" style="left:307px;top:666px;width:34px;height:90px;background:#2e3338"></div><div class="abs" style="left:342px;top:666px;width:319px;height:90px;background:#2e3338"></div><div class="abs" style="left:662px;top:666px;width:78px;height:90px;background:#2e3338"></div><div class="abs" style="left:741px;top:666px;width:251px;height:90px;background:#2e3338"></div><div class="abs" style="left:993px;top:666px;width:82px;height:90px;background:#2e3338"></div><div class="abs" style="left:1076px;top:666px;width:103px;height:90px;background:#2e3338"></div><div class="abs" style="left:1180px;top:666px;width:153px;height:90px;background:#2e3338"></div><div class="abs" style="left:1334px;top:666px;width:71px;height:90px;background:#2e3338"></div><div class="abs" style="left:1406px;top:666px;width:75px;height:90px;background:#2e3338"></div><div class="abs" style="left:1482px;top:666px;width:273px;height:90px;background:#2e3338"></div>
<div class="abs" style="left:307px;top:757px;width:34px;height:35px;background:#353a41"></div><div class="abs" style="left:342px;top:757px;width:319px;height:35px;background:#353a41"></div><div class="abs" style="left:662px;top:757px;width:78px;height:35px;background:#353a41"></div><div class="abs" style="left:741px;top:757px;width:251px;height:35px;background:#353a41"></div><div class="abs" style="left:993px;top:757px;width:82px;height:35px;background:#353a41"></div><div class="abs" style="left:1076px;top:757px;width:103px;height:35px;background:#353a41"></div><div class="abs" style="left:1180px;top:757px;width:153px;height:35px;background:#353a41"></div><div class="abs" style="left:1334px;top:757px;width:71px;height:35px;background:#353a41"></div><div class="abs" style="left:1406px;top:757px;width:75px;height:35px;background:#353a41"></div><div class="abs" style="left:1482px;top:757px;width:273px;height:35px;background:#353a41"></div>
<div class="abs th" style="left:347px;top:481px;">Name</div><span class="up" style="left:394.5px;top:482px;border-bottom-color:#858585;border-width:0 4.750px 5.300px 4.750px"></span><span class="dn" style="left:394.5px;top:494px;border-top-color:#2fa4e7"></span>
<div class="abs th" style="left:667px;top:481px;">Tags</div><span class="up" style="left:707px;top:482px;border-bottom-color:#858585;border-width:0 4.750px 5.300px 4.750px"></span><span class="dn" style="left:707px;top:494px;border-top-color:#858585"></span>
<div class="abs th" style="left:746px;top:481px;">Path</div><span class="up" style="left:785px;top:482px;border-bottom-color:#858585;border-width:0 4.750px 5.300px 4.750px"></span><span class="dn" style="left:785px;top:494px;border-top-color:#858585"></span>
<div class="abs th" style="left:998px;top:481px;">Size</div><span class="up" style="left:1034.5px;top:482px;border-bottom-color:#18a518;border-width:0 4.750px 5.300px 4.750px"></span><span class="dn" style="left:1034.5px;top:494px;border-top-color:#858585"></span>
<div class="abs th" style="left:1082px;top:481px;">%</div>
<div class="abs th" style="left:1184.5px;top:481px;letter-spacing:0.180px">Date Modified</div><span class="up" style="left:1287.7px;top:482px;border-bottom-color:#858585;border-width:0 4.750px 5.300px 4.750px"></span><span class="dn" style="left:1287.7px;top:494px;border-top-color:#858585"></span>
<div class="abs th" style="left:1339px;top:481px;">Type</div><span class="up" style="left:1378px;top:482px;border-bottom-color:#858585;border-width:0 4.750px 5.300px 4.750px"></span><span class="dn" style="left:1378px;top:494px;border-top-color:#858585"></span>
<div class="abs th" style="left:1411.5px;top:481px;">Cost</div><span class="up" style="left:1451px;top:482px;border-bottom-color:#858585;border-width:0 4.750px 5.300px 4.750px"></span><span class="dn" style="left:1451px;top:494px;border-top-color:#858585"></span>
<div class="abs th" style="left:1487px;top:481px;">Media Info</div><span class="up" style="left:1566px;top:482px;border-bottom-color:#858585;border-width:0 4.750px 5.300px 4.750px"></span><span class="dn" style="left:1566px;top:494px;border-top-color:#858585"></span>
<div class="abs" style="left:1100px;top:487px;width:10px;height:10px;border-radius:5px;background:#b0b4b9;color:#2e3338;font-size:8.500px;font-weight:bold;line-height:10px;text-align:center">?</div>
<svg class="abs" style="left:312px;top:517px" width="13" height="13" viewBox="0 0 13 13"><rect x="0.500" y="0.500" width="12.200" height="12.200" rx="2" fill="#fff" stroke="#8a8a8a" stroke-width="0.600"/></svg><svg class="abs" style="left:347px;top:516px;color:#64768a" width="11" height="14" viewBox="0 0 11 14"><path d="M0.800 0 H7 L11 4 V13.200 Q11 14 10.200 14 H0.800 Q0 14 0 13.200 V0.800 Q0 0 0.800 0Z"/><path d="M7 0 L11 4 H7Z" fill="#8496a8"/><rect x="2.800" y="6.800" width="5.400" height="1.300" fill="#353a41" opacity="0.75"/><rect x="2.800" y="9.300" width="5.400" height="1.300" fill="#353a41" opacity="0.75"/></svg><div class="abs td" style="left:364.7px;top:513px;color:#fff">sample_iTunes.mov</div><div class="btn" style="left:564px;top:515px;width:23px;height:20px;border-radius:3px"></div><svg class="abs" style="left:570px;top:520px;color:#8d939a" width="11" height="11" viewBox="0 0 11 11"><path d="M4 1.500 H5.300 Q5.600 0 7 0 Q8.400 0 8.700 1.500 H10 Q11 1.500 11 2.500 V10 Q11 11 10 11 H4 Q3.600 11 3.500 10.500 V8 H6.500 V9.800 L9.500 7 L6.500 4.200 V6 H3.500 V2.500 Q3.500 1.500 4 1.500Z"/><path d="M0 6.300 H2.300 V7.700 H0Z"/></svg><div class="btn" style="left:591px;top:515px;width:23px;height:20px;border-radius:3px"></div><svg class="abs" style="left:596px;top:519px" width="12" height="12" viewBox="0 0 12 12" fill="none" stroke="#3d9a3d" stroke-width="0.8" stroke-linecap="round"><path d="M1.200 7.500 Q0.500 1 6 0.800 Q11.500 1 10.800 7.500"/><path d="M2.700 9 Q2 2.600 6 2.500 Q10 2.600 9.300 9"/><path d="M4.200 10.500 Q3.500 4.200 6 4.200 Q8.500 4.200 7.800 10.500"/><path d="M6 5.800 V11.300"/><path d="M0.800 4.500 Q1.500 1.500 3.500 0.800"/><path d="M11.200 4.500 Q10.500 1.500 8.500 0.800"/></svg><div class="btn" style="left:618px;top:514px;width:38px;height:22px;border-radius:3px"></div><svg class="abs" style="left:623.5px;top:518px;color:#2a7fe6" width="15" height="13" viewBox="0 0 15 13"><g transform="translate(5,6.500)"><circle r="3" fill="none" stroke="currentColor" stroke-width="2.200"/><g stroke="currentColor" stroke-width="2.100" fill="none"><path d="M0 -5.200V-3.400M0 5.200V3.400M-5.200 0H-3.400M5.200 0H3.400M-3.700 -3.700L-2.400 -2.400M3.700 3.700L2.400 2.400M-3.700 3.700L-2.400 2.400M3.700 -3.700L2.400 -2.400"/></g></g><circle cx="12.300" cy="3" r="1.500" fill="none" stroke="currentColor" stroke-width="1.300"/><circle cx="12.300" cy="10" r="1.500" fill="none" stroke="currentColor" stroke-width="1.300"/></svg><span class="dn" style="left:642px;top:523px;border-width:4.500px 4px 0 4px;border-top-color:#2a7fe6"></span><div class="abs td" style="left:746px;top:513px;letter-spacing:0.14px">/storagegrid</div><div class="btn" style="left:959px;top:515px;width:28px;height:20px;border-radius:3px"></div><div class="abs" style="left:965.500px;top:519px;width:3px;height:3px;background:#b85fd6;box-shadow:0 4.500px 0 #b85fd6,0 9px 0 #b85fd6;border-radius:1px"></div><span class="dn" style="left:972px;top:523px;border-width:4.500px 4px 0 4px;border-top-color:#b85fd6"></span><div class="abs td" style="left:998px;top:513px;">3.1 MB</div><div class="abs" style="left:1081px;top:520px;width:93px;height:7px;border-radius:4px;background:#1b1d21;overflow:hidden"><i style="display:block;width:0px;height:7px;background:#5bc0de"></i></div><div class="abs td" style="left:1184.5px;top:513px;letter-spacing:0.100px">2022-10-18 19:42:34</div><div class="abs td" style="left:1339px;top:513px;color:#777">File</div><div class="abs td" style="left:1411.5px;top:513px;">$ 0.02</div>
<svg class="abs" style="left:312px;top:551px" width="13" height="13" viewBox="0 0 13 13"><rect x="0.500" y="0.500" width="12.200" height="12.200" rx="2" fill="#fff" stroke="#8a8a8a" stroke-width="0.600"/></svg><svg class="abs" style="left:347px;top:550px;color:#64768a" width="11" height="14" viewBox="0 0 11 14"><path d="M0.800 0 H7 L11 4 V13.200 Q11 14 10.200 14 H0.800 Q0 14 0 13.200 V0.800 Q0 0 0.800 0Z"/><path d="M7 0 L11 4 H7Z" fill="#8496a8"/><rect x="2.800" y="6.800" width="5.400" height="1.300" fill="#2e3338" opacity="0.75"/><rect x="2.800" y="9.300" width="5.400" height="1.300" fill="#2e3338" opacity="0.75"/></svg><div class="abs td" style="left:364.7px;top:547px;color:#fff;letter-spacing:0.2px">bomb clip.mov</div><div class="btn" style="left:564px;top:548px;width:23px;height:20px;border-radius:3px"></div><svg class="abs" style="left:570px;top:553px;color:#8d939a" width="11" height="11" viewBox="0 0 11 11"><path d="M4 1.500 H5.300 Q5.600 0 7 0 Q8.400 0 8.700 1.500 H10 Q11 1.500 11 2.500 V10 Q11 11 10 11 H4 Q3.600 11 3.500 10.500 V8 H6.500 V9.800 L9.500 7 L6.500 4.200 V6 H3.500 V2.500 Q3.500 1.500 4 1.500Z"/><path d="M0 6.300 H2.300 V7.700 H0Z"/></svg><div class="btn" style="left:591px;top:548px;width:23px;height:20px;border-radius:3px"></div><svg class="abs" style="left:596px;top:552px" width="12" height="12" viewBox="0 0 12 12" fill="none" stroke="#3d9a3d" stroke-width="0.8" stroke-linecap="round"><path d="M1.200 7.500 Q0.500 1 6 0.800 Q11.500 1 10.800 7.500"/><path d="M2.700 9 Q2 2.600 6 2.500 Q10 2.600 9.300 9"/><path d="M4.200 10.500 Q3.500 4.200 6 4.200 Q8.500 4.200 7.800 10.500"/><path d="M6 5.800 V11.300"/><path d="M0.800 4.500 Q1.500 1.500 3.500 0.800"/><path d="M11.200 4.500 Q10.500 1.500 8.500 0.800"/></svg><div class="btn" style="left:618px;top:547px;width:38px;height:22px;border-radius:3px"></div><svg class="abs" style="left:623.5px;top:551px;color:#2a7fe6" width="15" height="13" viewBox="0 0 15 13"><g transform="translate(5,6.500)"><circle r="3" fill="none" stroke="currentColor" stroke-width="2.200"/><g stroke="currentColor" stroke-width="2.100" fill="none"><path d="M0 -5.200V-3.400M0 5.200V3.400M-5.200 0H-3.400M5.200 0H3.400M-3.700 -3.700L-2.400 -2.400M3.700 3.700L2.400 2.400M-3.700 3.700L-2.400 2.400M3.700 -3.700L2.400 -2.400"/></g></g><circle cx="12.300" cy="3" r="1.500" fill="none" stroke="currentColor" stroke-width="1.300"/><circle cx="12.300" cy="10" r="1.500" fill="none" stroke="currentColor" stroke-width="1.300"/></svg><span class="dn" style="left:642px;top:556px;border-width:4.500px 4px 0 4px;border-top-color:#2a7fe6"></span><div class="abs td" style="left:746px;top:547px;letter-spacing:0.14px">/storagegrid</div><div class="btn" style="left:959px;top:548px;width:28px;height:20px;border-radius:3px"></div><div class="abs" style="left:965.500px;top:552px;width:3px;height:3px;background:#b85fd6;box-shadow:0 4.500px 0 #b85fd6,0 9px 0 #b85fd6;border-radius:1px"></div><span class="dn" style="left:972px;top:556px;border-width:4.500px 4px 0 4px;border-top-color:#b85fd6"></span><div class="abs td" style="left:998px;top:547px;">1.8 MB</div><div class="abs" style="left:1081px;top:554px;width:93px;height:7px;border-radius:4px;background:#1b1d21;overflow:hidden"><i style="display:block;width:0px;height:7px;background:#5bc0de"></i></div><div class="abs td" style="left:1184.5px;top:547px;letter-spacing:0.100px">2022-10-18 19:42:33</div><div class="abs td" style="left:1339px;top:547px;color:#777">File</div><div class="abs td" style="left:1411.5px;top:547px;">$ 0.01</div>
<svg class="abs" style="left:312px;top:584px" width="13" height="13" viewBox="0 0 13 13"><rect x="0.500" y="0.500" width="12.200" height="12.200" rx="2" fill="#fff" stroke="#8a8a8a" stroke-width="0.600"/></svg><svg class="abs" style="left:347px;top:583px;color:#64768a" width="11" height="14" viewBox="0 0 11 14"><path d="M0.800 0 H7 L11 4 V13.200 Q11 14 10.200 14 H0.800 Q0 14 0 13.200 V0.800 Q0 0 0.800 0Z"/><path d="M7 0 L11 4 H7Z" fill="#8496a8"/><rect x="2.800" y="6.800" width="5.400" height="1.300" fill="#49515a" opacity="0.75"/><rect x="2.800" y="9.300" width="5.400" height="1.300" fill="#49515a" opacity="0.75"/></svg><div class="abs td" style="left:364.7px;top:580px;color:#fff">WonderfulPistachios_GangnamStyle.mov</div><div class="btn" style="left:564px;top:602px;width:23px;height:20px;border-radius:3px"></div><svg class="abs" style="left:570px;top:607px;color:#8d939a" width="11" height="11" viewBox="0 0 11 11"><path d="M4 1.500 H5.300 Q5.600 0 7 0 Q8.400 0 8.700 1.500 H10 Q11 1.500 11 2.500 V10 Q11 11 10 11 H4 Q3.600 11 3.500 10.500 V8 H6.500 V9.800 L9.500 7 L6.500 4.200 V6 H3.500 V2.500 Q3.500 1.500 4 1.500Z"/><path d="M0 6.300 H2.300 V7.700 H0Z"/></svg><div class="btn" style="left:591px;top:602px;width:23px;height:20px;border-radius:3px"></div><svg class="abs" style="left:596px;top:606px" width="12" height="12" viewBox="0 0 12 12" fill="none" stroke="#3d9a3d" stroke-width="0.8" stroke-linecap="round"><path d="M1.200 7.500 Q0.500 1 6 0.800 Q11.500 1 10.800 7.500"/><path d="M2.700 9 Q2 2.600 6 2.500 Q10 2.600 9.300 9"/><path d="M4.200 10.500 Q3.500 4.200 6 4.200 Q8.500 4.200 7.800 10.500"/><path d="M6 5.800 V11.300"/><path d="M0.800 4.500 Q1.500 1.500 3.500 0.800"/><path d="M11.200 4.500 Q10.500 1.500 8.500 0.800"/></svg><div class="abs" style="left:613px;top:597px;width:49px;height:31px;border:3px solid #ee0000;border-radius:5px"></div><div class="abs" style="left:618px;top:601px;width:38.500px;height:22px;border-radius:3px;background:#0a0a0b"></div><svg class="abs" style="left:624px;top:605px;color:#fff" width="15" height="13" viewBox="0 0 15 13"><g transform="translate(5,6.500)"><circle r="3" fill="none" stroke="currentColor" stroke-width="2.200"/><g stroke="currentColor" stroke-width="2.100" fill="none"><path d="M0 -5.200V-3.400M0 5.200V3.400M-5.200 0H-3.400M5.200 0H3.400M-3.700 -3.700L-2.400 -2.400M3.700 3.700L2.400 2.400M-3.700 3.700L-2.400 2.400M3.700 -3.700L2.400 -2.400"/></g></g><circle cx="12.300" cy="3" r="1.500" fill="none" stroke="currentColor" stroke-width="1.300"/><circle cx="12.300" cy="10" r="1.500" fill="none" stroke="currentColor" stroke-width="1.300"/></svg><span class="dn" style="left:642px;top:610px;border-width:4.500px 4px 0 4px;border-top-color:#fff"></span><div class="abs td" style="left:746px;top:580px;letter-spacing:0.22px">/mnt/lucidlink/projects/Pistachio</div><div class="btn" style="left:959px;top:581px;width:28px;height:22px;border-radius:3px"></div><div class="abs" style="left:965.500px;top:586px;width:3px;height:3px;background:#b85fd6;box-shadow:0 4.500px 0 #b85fd6,0 9px 0 #b85fd6;border-radius:1px"></div><span class="dn" style="left:972px;top:590px;border-width:4.500px 4px 0 4px;border-top-color:#b85fd6"></span><div class="abs td" style="left:998px;top:580px;">3.7 GB</div><div class="abs" style="left:1081px;top:587px;width:93px;height:7px;border-radius:4px;background:#1b1d21;overflow:hidden"><i style="display:block;width:15px;height:7px;background:#5bc0de"></i></div><div class="abs td" style="left:1184.5px;top:580px;letter-spacing:0.100px">2022-10-02 17:35:41</div><div class="abs td" style="left:1339px;top:580px;color:#777">File</div><div class="abs td" style="left:1411.5px;top:580px;">$ 29.75</div><div class="abs td" style="left:1487px;top:580px;">media_info.resolution: 1920x1080,</div><div class="abs td" style="left:1487px;top:600px;">media_info.codec: v210,</div><div class="abs td" style="left:1487px;top:620px;letter-spacing:0.1px">media_info.codeclong: Uncompressed</div><div class="abs td" style="left:1487px;top:640px;">4:2:2 1 ...</div>
<svg class="abs" style="left:312px;top:675px" width="13" height="13" viewBox="0 0 13 13"><rect x="0.500" y="0.500" width="12.200" height="12.200" rx="2" fill="#fff" stroke="#8a8a8a" stroke-width="0.600"/></svg><svg class="abs" style="left:347px;top:674px;color:#64768a" width="11" height="14" viewBox="0 0 11 14"><path d="M0.800 0 H7 L11 4 V13.200 Q11 14 10.200 14 H0.800 Q0 14 0 13.200 V0.800 Q0 0 0.800 0Z"/><path d="M7 0 L11 4 H7Z" fill="#8496a8"/><rect x="2.800" y="6.800" width="5.400" height="1.300" fill="#2e3338" opacity="0.75"/><rect x="2.800" y="9.300" width="5.400" height="1.300" fill="#2e3338" opacity="0.75"/></svg><div class="abs td" style="left:351.4px;top:691px;color:#fff;letter-spacing:-0.360px">THELOSTWORLDJURASSICPARK_02240_</div><div class="abs td" style="left:347px;top:711px;color:#fff">81_185.mov</div><div class="btn" style="left:564px;top:712px;width:23px;height:20px;border-radius:3px"></div><svg class="abs" style="left:570px;top:717px;color:#8d939a" width="11" height="11" viewBox="0 0 11 11"><path d="M4 1.500 H5.300 Q5.600 0 7 0 Q8.400 0 8.700 1.500 H10 Q11 1.500 11 2.500 V10 Q11 11 10 11 H4 Q3.600 11 3.500 10.500 V8 H6.500 V9.800 L9.500 7 L6.500 4.200 V6 H3.500 V2.500 Q3.500 1.500 4 1.500Z"/><path d="M0 6.300 H2.300 V7.700 H0Z"/></svg><div class="btn" style="left:591px;top:712px;width:23px;height:20px;border-radius:3px"></div><svg class="abs" style="left:596px;top:716px" width="12" height="12" viewBox="0 0 12 12" fill="none" stroke="#3d9a3d" stroke-width="0.8" stroke-linecap="round"><path d="M1.200 7.500 Q0.500 1 6 0.800 Q11.500 1 10.800 7.500"/><path d="M2.700 9 Q2 2.600 6 2.500 Q10 2.600 9.300 9"/><path d="M4.200 10.500 Q3.500 4.200 6 4.200 Q8.500 4.200 7.800 10.500"/><path d="M6 5.800 V11.300"/><path d="M0.800 4.500 Q1.500 1.500 3.500 0.800"/><path d="M11.200 4.500 Q10.500 1.500 8.500 0.800"/></svg><div class="btn" style="left:618px;top:711px;width:38px;height:22px;border-radius:3px"></div><svg class="abs" style="left:623.5px;top:715px;color:#2a7fe6" width="15" height="13" viewBox="0 0 15 13"><g transform="translate(5,6.500)"><circle r="3" fill="none" stroke="currentColor" stroke-width="2.200"/><g stroke="currentColor" stroke-width="2.100" fill="none"><path d="M0 -5.200V-3.400M0 5.200V3.400M-5.200 0H-3.400M5.200 0H3.400M-3.700 -3.700L-2.400 -2.400M3.700 3.700L2.400 2.400M-3.700 3.700L-2.400 2.400M3.700 -3.700L2.400 -2.400"/></g></g><circle cx="12.300" cy="3" r="1.500" fill="none" stroke="currentColor" stroke-width="1.300"/><circle cx="12.300" cy="10" r="1.500" fill="none" stroke="currentColor" stroke-width="1.300"/></svg><span class="dn" style="left:642px;top:720px;border-width:4.500px 4px 0 4px;border-top-color:#2a7fe6"></span><div class="abs td" style="left:746px;top:671px;">/mnt</div><div class="abs td" style="left:777px;top:671px;letter-spacing:0.080px">/gpfs/projects/NBCU/637609</div><div class="btn" style="left:959px;top:672px;width:28px;height:22px;border-radius:3px"></div><div class="abs" style="left:965.500px;top:677px;width:3px;height:3px;background:#b85fd6;box-shadow:0 4.500px 0 #b85fd6,0 9px 0 #b85fd6;border-radius:1px"></div><span class="dn" style="left:972px;top:681px;border-width:4.500px 4px 0 4px;border-top-color:#b85fd6"></span><div class="abs td" style="left:998px;top:671px;">1.2 GB</div><div class="abs" style="left:1081px;top:678px;width:93px;height:7px;border-radius:4px;background:#1b1d21;overflow:hidden"><i style="display:block;width:5px;height:7px;background:#5bc0de"></i></div><div class="abs td" style="left:1184.5px;top:671px;letter-spacing:0.100px">2022-10-02 17:41:59</div><div class="abs td" style="left:1339px;top:671px;color:#777">File</div><div class="abs td" style="left:1411.5px;top:671px;">$ 9.40</div><div class="abs td" style="left:1487px;top:671px;">media_info.resolution: 1920x1080,</div><div class="abs td" style="left:1487px;top:691px;">media_info.codec: h264,</div><div class="abs td" style="left:1487px;top:711px;letter-spacing:0.1px">media_info.codeclong: H.264 / AVC /</div><div class="abs td" style="left:1487px;top:731px;">MPEG-4 ...</div>
<svg class="abs" style="left:312px;top:766px" width="13" height="13" viewBox="0 0 13 13"><rect x="0.500" y="0.500" width="12.200" height="12.200" rx="2" fill="#fff" stroke="#8a8a8a" stroke-width="0.600"/></svg><svg class="abs" style="left:347px;top:765px;color:#64768a" width="11" height="14" viewBox="0 0 11 14"><path d="M0.800 0 H7 L11 4 V13.200 Q11 14 10.200 14 H0.800 Q0 14 0 13.200 V0.800 Q0 0 0.800 0Z"/><path d="M7 0 L11 4 H7Z" fill="#8496a8"/><rect x="2.800" y="6.800" width="5.400" height="1.300" fill="#353a41" opacity="0.75"/><rect x="2.800" y="9.300" width="5.400" height="1.300" fill="#353a41" opacity="0.75"/></svg><div class="abs td" style="left:364.7px;top:762px;color:#fff;letter-spacing:-0.070px">Se la folla en el granero - XVIDEOS.COM.mov</div><div class="abs td" style="left:746px;top:762px;">/mnt/fabio/XXX/XXX</div><div class="btn" style="left:959px;top:763px;width:28px;height:22px;border-radius:3px"></div><div class="abs" style="left:965.500px;top:768px;width:3px;height:3px;background:#b85fd6;box-shadow:0 4.500px 0 #b85fd6,0 9px 0 #b85fd6;border-radius:1px"></div><span class="dn" style="left:972px;top:772px;border-width:4.500px 4px 0 4px;border-top-color:#b85fd6"></span><div class="abs td" style="left:998px;top:762px;">71.1 MB</div><div class="abs" style="left:1081px;top:769px;width:93px;height:7px;border-radius:4px;background:#1b1d21;overflow:hidden"><i style="display:block;width:1px;height:7px;background:#5bc0de"></i></div><div class="abs td" style="left:1184.5px;top:762px;letter-spacing:0.100px">2015-11-29 07:36:42</div><div class="abs td" style="left:1339px;top:762px;color:#777">File</div><div class="abs td" style="left:1411.5px;top:762px;">$ 0.55</div>
<div class="abs" style="left:619px;top:626px;width:158px;height:125px;background:#3a3f44;border-radius:4px;box-shadow:0 6px 12px rgba(0,0,0,.25)"></div>
<div class="abs" style="left:619px;top:654px;width:158px;height:23px;background:#2a2d31"></div>
<svg class="abs" style="left:639px;top:637px;color:#e6e6e6" width="13" height="10" viewBox="0 0 13 10"><path d="M0.600 9 V1.200 Q0.600 0.600 1.200 0.600 H4 L5.200 1.800 H9.800 Q10.400 1.800 10.400 2.400 V4 M0.600 9.400 L2.800 4.300 H12.300 L10.200 9.400Z" fill="none" stroke="currentColor" stroke-width="1.200" stroke-linejoin="round"/></svg><div class="abs" style="left:655.8px;top:631px;height:23px;line-height:23px;font-size:12px;color:#e6e6e6;white-space:nowrap">live view</div>
<svg class="abs" style="left:639px;top:659px;color:#e6e6e6" width="9" height="12" viewBox="0 0 9 12"><path d="M1.200 0.600 H5.500 L8.400 3.500 V10.800 Q8.400 11.400 7.800 11.400 H1.200 Q0.600 11.400 0.600 10.800 V1.200 Q0.600 0.600 1.200 0.600Z" fill="none" stroke="currentColor" stroke-width="1.200"/><path d="M5.300 0.600 V3.700 H8.400" fill="none" stroke="currentColor" stroke-width="1"/><path d="M2.200 9.300 V5.600 H3.400 L4.600 7.400 L5.600 6.600 L6.800 8 V9.300Z"/></svg><div class="abs" style="left:651px;top:654px;height:23px;line-height:23px;font-size:12px;color:#e6e6e6;white-space:nowrap">open in CineViewer</div>
<svg class="abs" style="left:639px;top:682px;color:#e6e6e6" width="9" height="12" viewBox="0 0 9 12"><path d="M1.200 0.600 H5.500 L8.400 3.500 V10.800 Q8.400 11.400 7.800 11.400 H1.200 Q0.600 11.400 0.600 10.800 V1.200 Q0.600 0.600 1.200 0.600Z" fill="none" stroke="currentColor" stroke-width="1.200"/><path d="M5.300 0.600 V3.700 H8.400" fill="none" stroke="currentColor" stroke-width="1"/><path d="M2.200 9.300 V5.600 H3.400 L4.600 7.400 L5.600 6.600 L6.800 8 V9.300Z"/></svg><div class="abs" style="left:651px;top:677px;height:23px;line-height:23px;font-size:12px;color:#e6e6e6;white-space:nowrap">open in Glim</div>
<svg class="abs" style="left:639px;top:705px;color:#e6e6e6" width="13" height="11" viewBox="0 0 13 11"><rect x="2.600" y="0.600" width="9.800" height="7.300" rx="0.800" fill="none" stroke="currentColor" stroke-width="1.200"/><path d="M0.600 2.500 V9.500 Q0.600 10.400 1.500 10.400 H10.500" fill="none" stroke="currentColor" stroke-width="1.200"/><path d="M4 6.800 L6.300 4.300 L7.800 5.800 L9.300 4.600 L11 6.800Z"/></svg><div class="abs" style="left:655.5px;top:700px;height:23px;line-height:23px;font-size:12px;color:#e6e6e6;white-space:nowrap">find file sequences</div>
<svg class="abs" style="left:639px;top:728px;color:#e6e6e6" width="9" height="12" viewBox="0 0 9 12"><path d="M1.200 0.600 H5.500 L8.400 3.500 V10.800 Q8.400 11.400 7.800 11.400 H1.200 Q0.600 11.400 0.600 10.800 V1.200 Q0.600 0.600 1.200 0.600Z" fill="none" stroke="currentColor" stroke-width="1.200"/><path d="M5.300 0.600 V3.700 H8.400" fill="none" stroke="currentColor" stroke-width="1"/><path d="M2.200 9.300 V5.600 H3.400 L4.600 7.400 L5.600 6.600 L6.800 8 V9.300Z"/></svg><div class="abs" style="left:651px;top:723px;height:23px;line-height:23px;font-size:12px;color:#e6e6e6;white-space:nowrap">submit to Vantage</div>
<svg class="abs" style="left:558px;top:634px" width="80" height="62" viewBox="0 0 80 62"><path d="M46.68 8.56 L75.80 30.40 L46.68 52.24 A27.3 27.3 0 1 1 46.68 8.56Z" fill="#f40000"/></svg>
<!--TABLE-END-->
</body>
</html>
